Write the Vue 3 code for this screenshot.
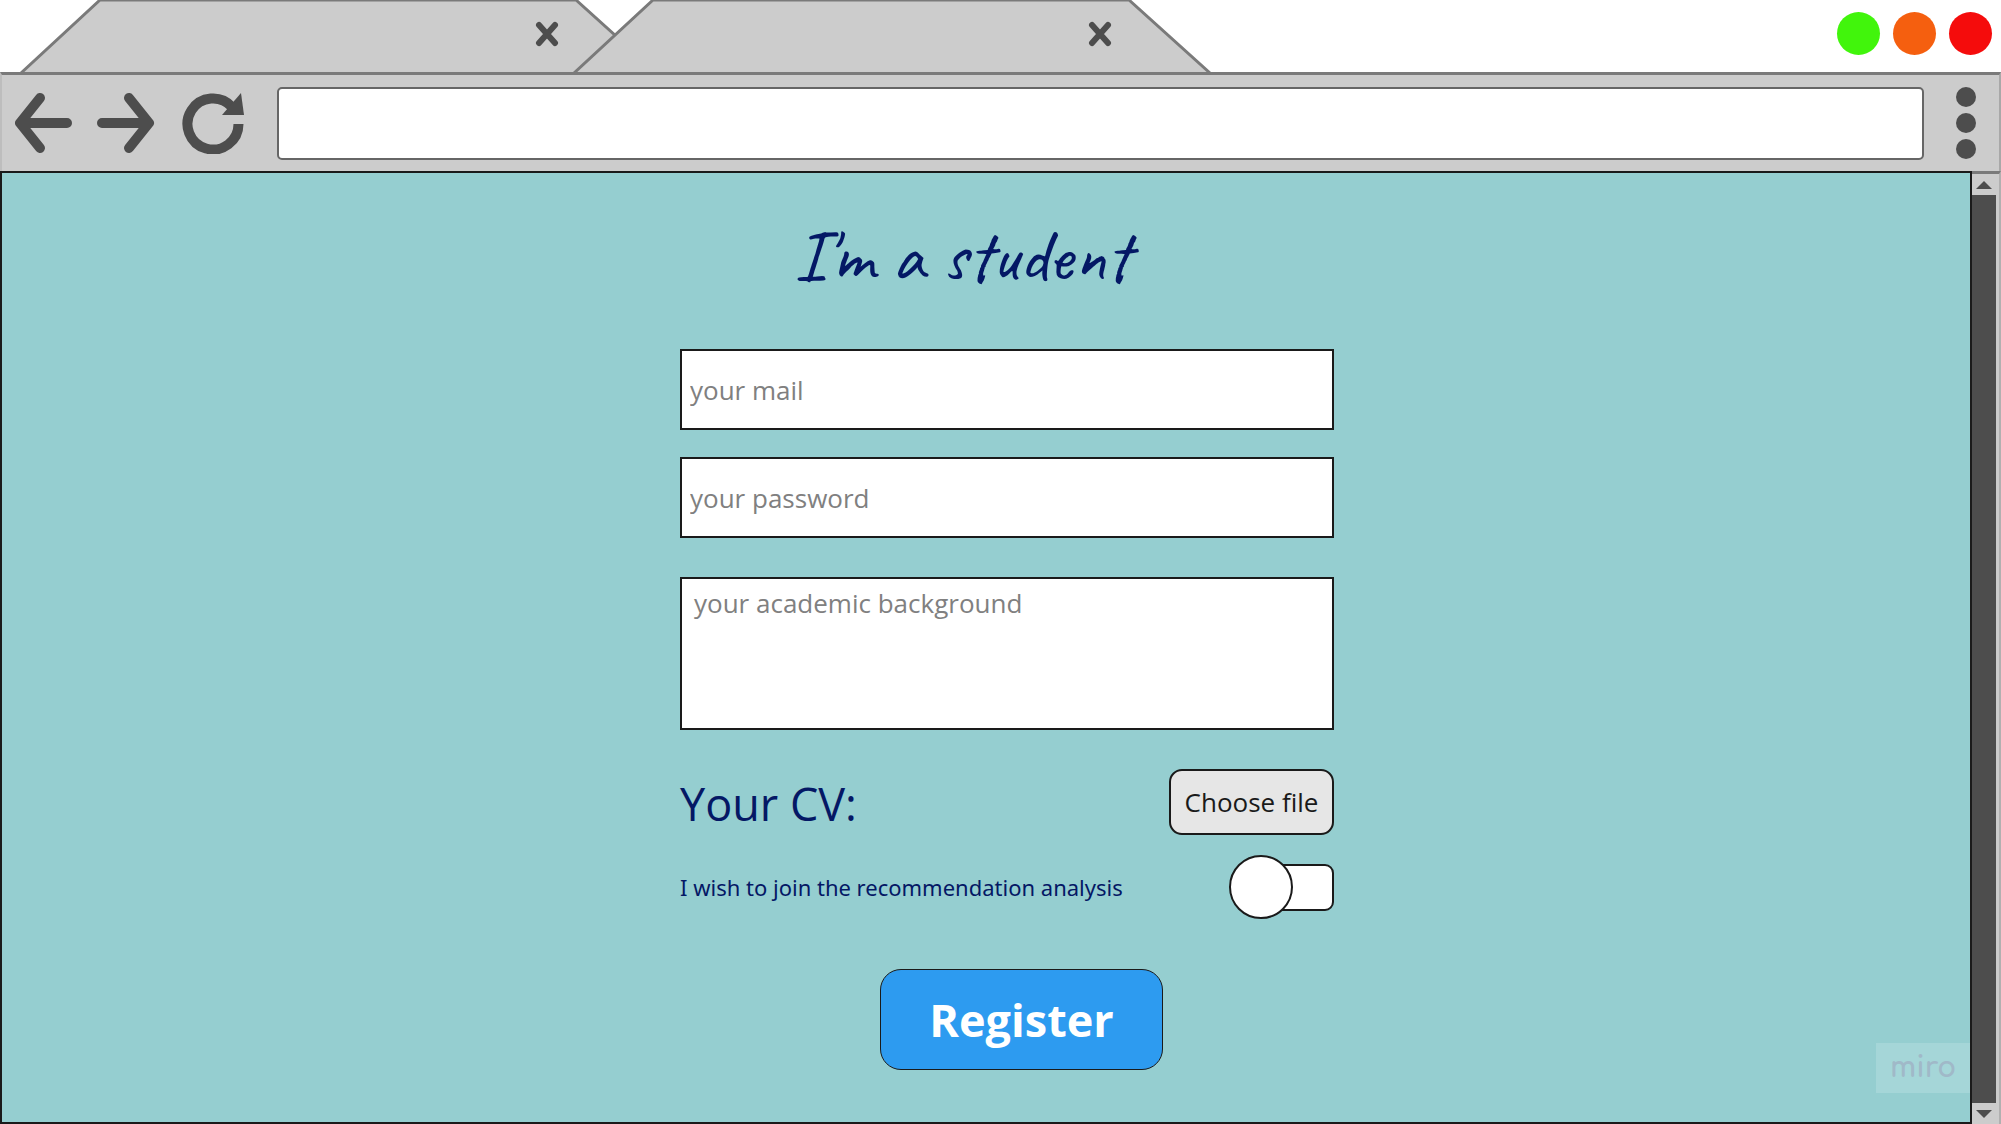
<script setup>
import { ref } from 'vue'

const tabs = ref(['first', 'second'])
const lights = ['#41f50c', '#f55f0f', '#f50c0c']
const mail = ref('')
const password = ref('')
const background = ref('')
const address = ref('')
const joinAnalysis = ref(false)
const filePicker = ref(null)
</script>

<template>
  <div class="browser">
    <header class="tab-strip">
      <div class="tabs">
        <div v-for="tab in tabs" :key="tab" class="tab">
          <svg class="tab-shape" viewBox="0 0 638 74" aria-hidden="true">
            <path d="M1 73 L80 0 H556 L637 73" />
          </svg>
          <button type="button" class="tab-close" aria-label="Close tab">
            <svg viewBox="0 0 24 26" aria-hidden="true">
              <path d="M4 4 L20 22 M20 4 L4 22" />
            </svg>
          </button>
        </div>
      </div>
      <div class="lights">
        <span v-for="color in lights" :key="color" class="light" :style="{ background: color }"></span>
      </div>
    </header>

    <nav class="toolbar">
      <button type="button" class="tool" aria-label="Back">
        <svg width="58" height="62" viewBox="0 0 58 62" aria-hidden="true">
          <path class="line" d="M25 6 L5 31 L25 56 M5 31 H52" />
        </svg>
      </button>
      <button type="button" class="tool" aria-label="Forward">
        <svg width="58" height="62" viewBox="0 0 58 62" aria-hidden="true">
          <path class="line" d="M32 6 L52 31 L32 56 M52 31 H5" />
        </svg>
      </button>
      <button type="button" class="tool" aria-label="Reload">
        <svg width="66" height="62" viewBox="0 0 66 62" aria-hidden="true">
          <path class="ring" d="M59.500 32 A25.500 25.500 0 1 1 53 15" />
          <path class="head" d="M43 23 L65 23 L62 1 Z" />
        </svg>
      </button>
      <input v-model="address" class="address" type="text" aria-label="Address" />
      <button type="button" class="menu" aria-label="Menu">
        <span></span><span></span><span></span>
      </button>
    </nav>

    <div class="viewport">
      <main class="page">
        <form class="form" @submit.prevent>
          <h1>I'm a student</h1>
          <input v-model="mail" class="field" type="email" placeholder="your mail" aria-label="your mail" />
          <input v-model="password" class="field" type="password" placeholder="your password" aria-label="your password" />
          <textarea v-model="background" class="field area" placeholder="your academic background" aria-label="your academic background"></textarea>
          <div class="row">
            <label class="cv" for="cv">Your CV:</label>
            <input id="cv" ref="filePicker" type="file" hidden />
            <button type="button" class="choose" @click="filePicker.click()">Choose file</button>
          </div>
          <div class="row join">
            <label for="join">I wish to join the recommendation analysis</label>
            <input id="join" v-model="joinAnalysis" class="toggle" type="checkbox" />
          </div>
          <button type="submit" class="register">Register</button>
        </form>
        <span class="badge">miro</span>
      </main>
      <div class="scrollbar">
        <button type="button" class="arrow" aria-label="Scroll up">
          <svg width="16" height="10" viewBox="0 0 16 10" aria-hidden="true"><path d="M0 9 L8 1 L16 9 Z" /></svg>
        </button>
        <div class="thumb"></div>
        <button type="button" class="arrow" aria-label="Scroll down">
          <svg width="16" height="10" viewBox="0 0 16 10" aria-hidden="true"><path d="M0 1 L8 9 L16 1 Z" /></svg>
        </button>
      </div>
    </div>
  </div>
</template>

<style>
body {
  margin: 0;
  background: #fff;
}
</style>

<style scoped>
* {
  box-sizing: border-box;
}

button {
  padding: 0;
  border: 0;
  background: none;
  font: inherit;
  cursor: pointer;
}

svg {
  display: block;
}

.browser {
  display: flex;
  flex-direction: column;
  min-height: 100vh;
  font-family: "Open Sans", "Noto Sans", sans-serif;
}

.tab-strip {
  display: flex;
  justify-content: space-between;
  height: 72px;
  padding: 0 9px 0 20px;
}

.tabs {
  display: flex;
}

.tab {
  position: relative;
  flex: none;
  width: 638px;
  height: 74px;
}

.tab + .tab {
  margin-left: -85px;
}

.tab-shape {
  width: 100%;
  height: 100%;
  fill: #ccc;
  stroke: #7a7a7a;
  stroke-width: 3;
}

.tab-close {
  position: absolute;
  top: 21px;
  right: 99px;
  width: 24px;
  height: 26px;
}

.tab-close path {
  fill: none;
  stroke: #4d4d4d;
  stroke-width: 6;
  stroke-linecap: round;
}

.lights {
  display: flex;
  gap: 13px;
  padding-top: 12px;
}

.light {
  width: 43px;
  height: 43px;
  border-radius: 50%;
}

.toolbar {
  position: relative;
  display: flex;
  align-items: center;
  gap: 24px;
  height: 99px;
  padding: 0 23px 0 13px;
  border-top: 3px solid #7a7a7a;
  border-left: 2px solid #bdbdbd;
  border-right: 2px solid #a8a8a8;
  background: #ccc;
}

.tool .line {
  fill: none;
  stroke: #4d4d4d;
  stroke-width: 10;
  stroke-linecap: round;
  stroke-linejoin: round;
}

.tool .ring {
  fill: none;
  stroke: #4d4d4d;
  stroke-width: 10;
}

.tool .head {
  fill: #4d4d4d;
}

.address {
  flex: 1;
  min-width: 0;
  height: 73px;
  margin: 0 8px;
  padding: 0 12px;
  border: 2px solid #666;
  border-radius: 5px;
  background: #fff;
  font: 26px "Open Sans", sans-serif;
}

.menu {
  display: flex;
  flex-direction: column;
  gap: 6px;
}

.menu span {
  width: 20px;
  height: 20px;
  border-radius: 50%;
  background: #4d4d4d;
}

.viewport {
  display: flex;
  flex: 1;
}

.page {
  position: relative;
  display: flex;
  flex: 1;
  justify-content: center;
  padding: 40px 0 50px 42px;
  border: 2px solid #1a1a1a;
  background: #95ced0;
}

.form {
  display: flex;
  flex-direction: column;
  width: 654px;
  color: #041865;
}

h1 {
  height: 96px;
  margin: 0 90px 40px 0;
  font: 400 74px/86px "Caveat", "Lato", cursive;
  text-align: center;
}

.field {
  width: 100%;
  height: 81px;
  margin: 0 0 27px;
  padding: 0 8px;
  border: 2px solid #1a1a1a;
  border-radius: 0;
  background: #fff;
  color: #1a1a1a;
  font: 26px/36px "Open Sans", sans-serif;
  outline: none;
}

.field::placeholder {
  color: #808080;
  opacity: 1;
}

.area {
  height: 153px;
  margin: 12px 0 39px;
  padding: 6px 12px;
  resize: none;
}

.row {
  display: flex;
  align-items: center;
  justify-content: space-between;
  height: 66px;
}

.cv {
  padding-top: 4px;
  font-size: 45px;
  line-height: 60px;
}

.choose {
  width: 165px;
  height: 66px;
  border: 2px solid #1a1a1a;
  border-radius: 13px;
  background: #e6e6e6;
  color: #1a1a1a;
  font-size: 26px;
}

.join {
  margin-top: 19px;
  font: 22px/32px "Noto Sans", sans-serif;
}

.toggle {
  position: relative;
  width: 88px;
  height: 47px;
  margin: 0;
  border: 2px solid #1a1a1a;
  border-radius: 9px;
  background: #fff;
  appearance: none;
  cursor: pointer;
}

.toggle::before {
  content: "";
  position: absolute;
  top: -11px;
  left: -19px;
  width: 64px;
  height: 64px;
  box-sizing: border-box;
  border: 2px solid #1a1a1a;
  border-radius: 50%;
  background: #fff;
}

.toggle:checked::before {
  left: 40px;
}

.register {
  width: 283px;
  height: 101px;
  margin: 49px 0 0 200px;
  border: 1px solid #1a1a1a;
  border-radius: 21px;
  background: #2d9bf0;
  color: #fff;
  font-size: 45px;
  font-weight: 700;
}

.badge {
  position: absolute;
  right: 0;
  bottom: 29px;
  width: 94px;
  height: 50px;
  background: #a5d6d8;
  color: #a0b9c8;
  font: 700 28px/50px "Comfortaa", "Quicksand", "Montserrat", "Lato", sans-serif;
  text-align: center;
}

.scrollbar {
  display: flex;
  flex-direction: column;
  width: 29px;
  padding-right: 3px;
  border-top: 3px solid #7a7a7a;
  border-right: 2px solid #b0b0b0;
  background: #ccc;
}

.arrow {
  display: flex;
  align-items: center;
  justify-content: center;
  height: 21px;
}

.arrow path {
  fill: #4d4d4d;
}

.thumb {
  flex: 1;
  background: #4d4d4d;
}
</style>
